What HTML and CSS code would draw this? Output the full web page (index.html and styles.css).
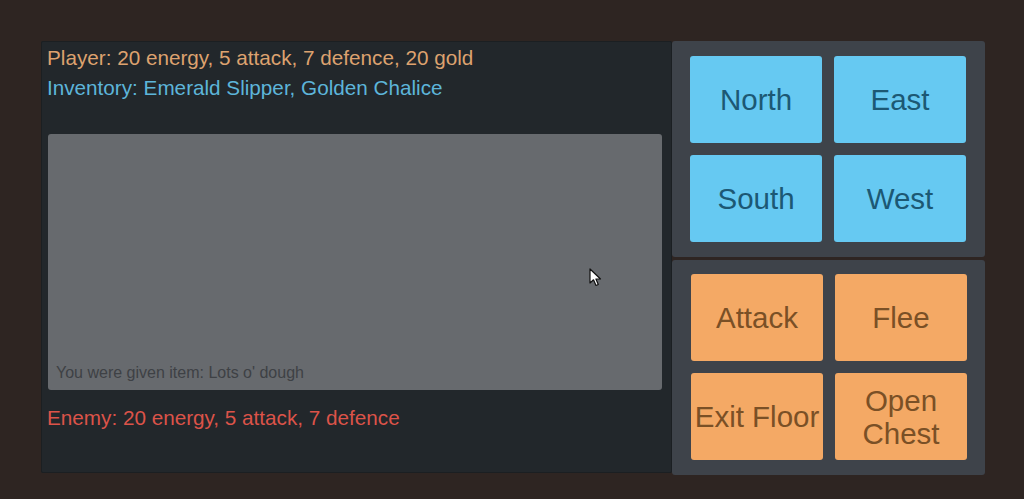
FILE: index.html
```html
<!DOCTYPE html>
<html>
<head>
<meta charset="utf-8">
<link rel="stylesheet" href="styles.css">
</head>
<body>
<div class="screen">
  <div class="main">
    <section class="status">
      <div class="line player">Player: 20 energy, 5 attack, 7 defence, 20 gold</div>
      <div class="line inventory">Inventory: Emerald Slipper, Golden Chalice</div>
      <div class="log">
        <div class="log-text">You were given item: Lots o' dough</div>
        <svg class="cursor" width="14" height="20" viewBox="0 0 14 20"><path d="M1 1 L1 15 L4.5 11.8 L7 17.5 L9.3 16.5 L6.9 11 L11.5 11 Z" fill="#fff" stroke="#111" stroke-width="1.2" stroke-linejoin="round"/></svg>
      </div>
      <div class="line enemy">Enemy: 20 energy, 5 attack, 7 defence</div>
    </section>
    <div class="controls">
      <div class="pad pad-top">
        <button class="btn blue">North</button>
        <button class="btn blue">East</button>
        <button class="btn blue">South</button>
        <button class="btn blue">West</button>
      </div>
      <div class="pad pad-bottom">
        <button class="btn orange">Attack</button>
        <button class="btn orange">Flee</button>
        <button class="btn orange">Exit Floor</button>
        <button class="btn orange">Open<br>Chest</button>
      </div>
    </div>
  </div>
</div>
</body>
</html>
```
FILE: styles.css
```css
html, body {
  margin: 0;
  padding: 0;
  background: #2e2522;
  width: 1024px;
  height: 499px;
  overflow: hidden;
  font-family: "Liberation Sans", Arial, sans-serif;
}
.screen {
  padding: 41px 0 0 41px;
}
.main {
  display: flex;
}
.status {
  width: 631px;
  height: 432px;
  box-sizing: border-box;
  background: #22272b;
  border-radius: 2px;
  box-shadow: inset 0 0 0 1px #1b1f22;
  padding: 6px 10px 0 6px;
  display: flex;
  flex-direction: column;
}
.line {
  font-size: 20.7px;
  line-height: 22px;
  white-space: nowrap;
}
.player { color: #dda26f; }
.inventory { color: #5db5da; margin-top: 8px; }
.enemy { color: #dc5349; margin-top: 17px; }
.log {
  position: relative;
  margin-top: 35px;
  margin-left: 1px;
  height: 256px;
  background: #676a6e;
  border-radius: 3px;
  display: flex;
  align-items: flex-end;
}
.log-text {
  font-size: 16px;
  line-height: 18px;
  color: #3e4145;
  padding: 0 0 8px 8px;
}
.cursor {
  position: absolute;
  left: 541px;
  top: 134px;
}
.controls {
  display: flex;
  flex-direction: column;
  gap: 3px;
  width: 313px;
}
.pad {
  background: #3e434a;
  border-radius: 3px;
  display: grid;
  grid-template-columns: 132px 132px;
  grid-auto-rows: 87px;
  gap: 12px;
  box-sizing: border-box;
}
.pad-top {
  height: 216px;
  padding: 15px 0 0 18px;
}
.pad-bottom {
  height: 215px;
  padding: 14px 0 0 19px;
}
.btn {
  border: none;
  border-radius: 3px;
  font-family: "Liberation Sans", Arial, sans-serif;
  font-size: 29.5px;
  line-height: 33px;
  padding: 0;
  margin: 0;
  display: flex;
  align-items: center;
  justify-content: center;
  text-align: center;
  white-space: nowrap;
}
.blue {
  background: #66c9f2;
  color: #1c5874;
}
.orange {
  background: #f4a965;
  color: #7a5026;
}
```
